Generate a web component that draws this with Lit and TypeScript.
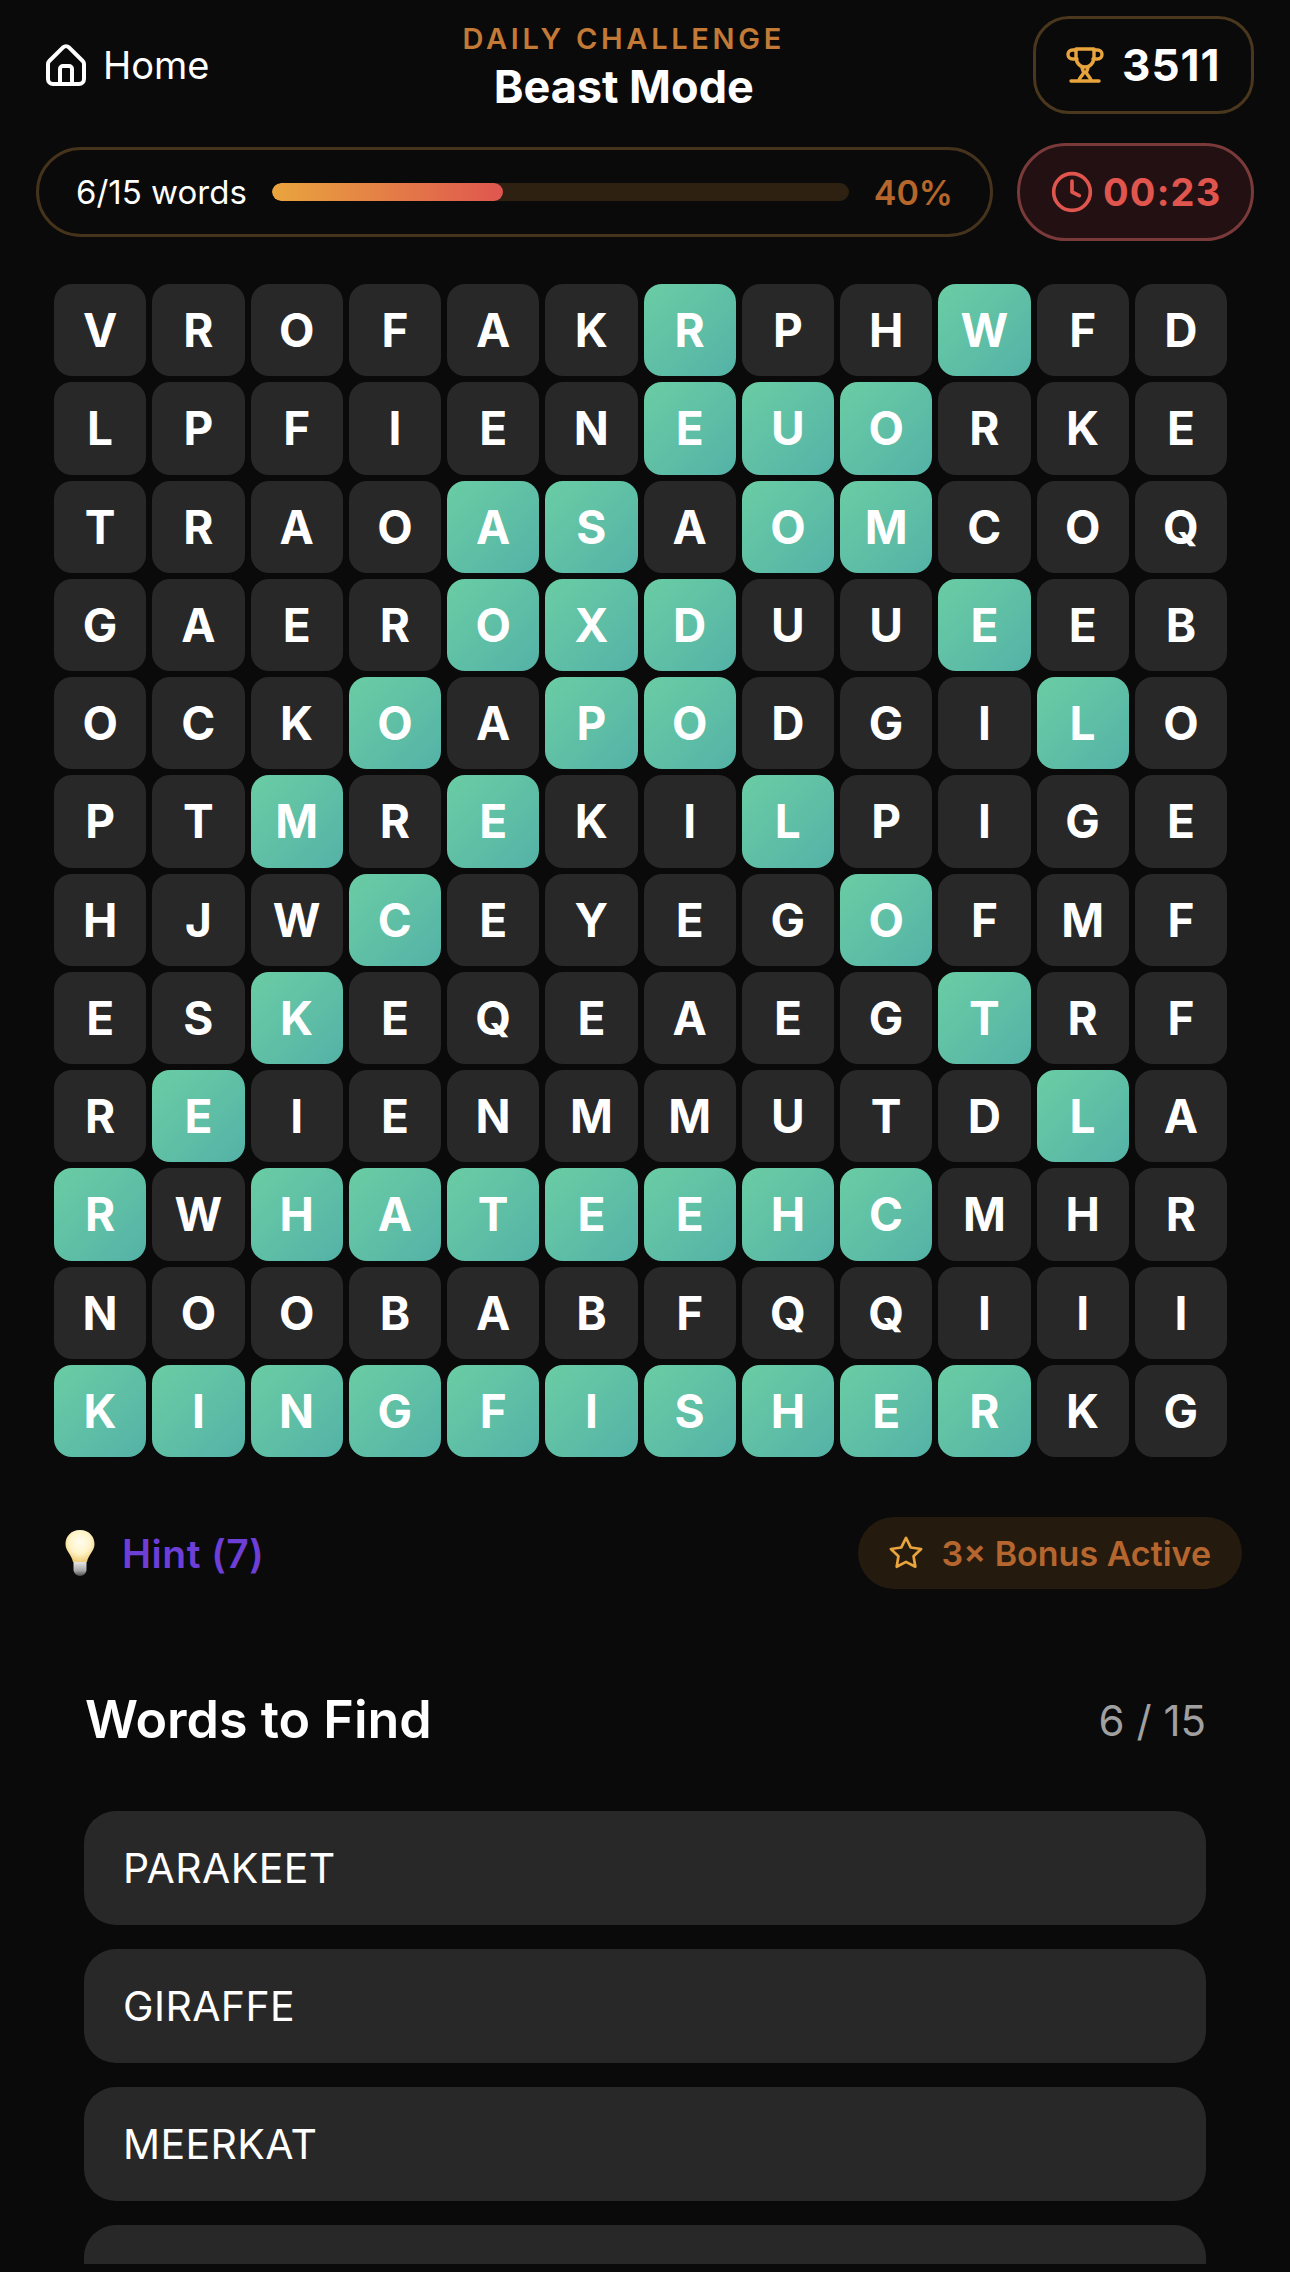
import { LitElement, html, css } from 'lit';
import { customElement } from 'lit/decorators.js';

// lowercase letters are the cells of words already found
const GRID = [
  'VROFAKrPHwFD',
  'LPFIENeuoRKE',
  'TRAOasAomCOQ',
  'GAERoxdUUeEB',
  'OCKoApoDGIlO',
  'PTmReKIlPIGE',
  'HJWcEYEGoFMF',
  'ESkEQEAEGtRF',
  'ReIENMMUTDlA',
  'rWhateehcMHR',
  'NOOBABFQQIII',
  'kingfisherKG',
];

// the fourth row is cut off by the screen edge before its text starts
const WORDS = ['PARAKEET', 'GIRAFFE', 'MEERKAT', ''];

@customElement('app-root')
export class AppRoot extends LitElement {
  static styles = css`
    :host {
      display: block;
      height: 2272px;
      background: #0a0a0a;
      color: #fff;
      font-family: Inter, 'Noto Sans', sans-serif;
    }
    .screen {
      height: 2264px;
      overflow: hidden;
    }
    .header {
      display: flex;
      justify-content: space-between;
      align-items: center;
      padding: 16px 36px 0 46px;
    }
    .home {
      display: flex;
      align-items: center;
      gap: 17px;
      font-size: 38px;
      line-height: 44px;
    }
    .home svg {
      width: 40px;
      height: 42px;
    }
    .title {
      align-self: flex-start;
      margin: 6px 0 0 5px;
      text-align: center;
    }
    .eyebrow {
      font-size: 29px;
      line-height: 34px;
      font-weight: 600;
      letter-spacing: 3.7px;
      color: #c27a36;
    }
    .mode {
      margin-top: 4px;
      font-size: 45px;
      line-height: 54px;
      font-weight: 700;
    }
    .score {
      display: flex;
      align-items: center;
      gap: 18px;
      width: 221px;
      height: 98px;
      box-sizing: border-box;
      padding-left: 30px;
      border: 3px solid #4a371d;
      border-radius: 36px;
      font-size: 44px;
      font-weight: 700;
      letter-spacing: 1px;
    }
    .score svg {
      width: 38px;
      height: 38px;
    }
    .stats {
      display: flex;
      align-items: center;
      gap: 24px;
      padding: 29px 36px 0;
    }
    .progress {
      flex: 1;
      display: flex;
      align-items: center;
      height: 90px;
      box-sizing: border-box;
      padding: 0 37px;
      border: 3px solid #46331c;
      border-radius: 45px;
      font-size: 33px;
    }
    .track {
      flex: 1;
      height: 18px;
      margin: 0 25px;
      border-radius: 9px;
      background: #2e2111;
      overflow: hidden;
    }
    .fill {
      height: 100%;
      border-radius: 9px;
      background: linear-gradient(90deg, #e9a53d, #e0564f);
    }
    .pct {
      font-size: 34px;
      font-weight: 600;
      color: #b5662b;
    }
    .timer {
      display: flex;
      align-items: center;
      gap: 11px;
      width: 237px;
      height: 98px;
      box-sizing: border-box;
      padding-left: 32px;
      border: 3px solid #7a3a3a;
      border-radius: 49px;
      background: #221012;
      font-size: 38px;
      font-weight: 700;
      letter-spacing: 1.2px;
      color: #e0564f;
    }
    .timer svg {
      width: 44px;
      height: 44px;
      margin: 0 -2px;
    }
    .grid {
      display: grid;
      grid-template-columns: repeat(12, 1fr);
      gap: 6px;
      width: 1173px;
      margin: 43px 0 0 54px;
    }
    .cell {
      height: 92.25px;
      display: flex;
      align-items: center;
      justify-content: center;
      border-radius: 18px;
      background: #282828;
      font-size: 46px;
      font-weight: 700;
    }
    .cell.found {
      background: linear-gradient(135deg, #6acda4, #54b2a7);
    }
    .tools {
      display: flex;
      align-items: center;
      justify-content: space-between;
      padding: 60px 48px 0 59px;
    }
    .hint {
      display: flex;
      align-items: center;
      gap: 21px;
      font-size: 39px;
      font-weight: 600;
      letter-spacing: 0.5px;
      color: #6d3fd6;
    }
    .hint svg {
      width: 42px;
      height: 48px;
    }
    .bonus {
      display: flex;
      align-items: center;
      gap: 17px;
      height: 72px;
      box-sizing: border-box;
      padding: 0 31px 0 29px;
      border-radius: 36px;
      background: #251a0e;
      font-size: 34px;
      font-weight: 600;
      color: #b5662f;
    }
    .bonus svg {
      width: 38px;
      height: 38px;
    }
    .words {
      padding: 99px 84px 0;
    }
    .words-head {
      display: flex;
      align-items: center;
      justify-content: space-between;
      padding-left: 1px;
      margin-bottom: 59px;
    }
    .words-head h2 {
      margin: 0;
      font-size: 52px;
      line-height: 64px;
      font-weight: 600;
    }
    .count {
      font-size: 42px;
      color: #a0a0a0;
    }
    .word {
      display: flex;
      align-items: center;
      height: 114px;
      padding: 0 39px;
      margin-bottom: 24px;
      border-radius: 32px;
      background: #282828;
      font-size: 41px;
      letter-spacing: 0.4px;
    }
  `;

  render() {
    return html`
      <div class="screen">
        <div class="header">
          <div class="home">
            <svg viewBox="0 0 40 42" fill="none" stroke="#fff" stroke-width="4" stroke-linejoin="round" stroke-linecap="round">
              <path d="M2 20a4 4 0 0 1 1.300-3L17.300 3.200a4 4 0 0 1 5.400 0L36.700 17a4 4 0 0 1 1.300 3V35a5 5 0 0 1-5 5H7a5 5 0 0 1-5-5Z" />
              <path d="M14 40V25a3 3 0 0 1 3-3h6a3 3 0 0 1 3 3v15" />
            </svg>
            Home
          </div>
          <div class="title">
            <div class="eyebrow">DAILY CHALLENGE</div>
            <div class="mode">Beast Mode</div>
          </div>
          <div class="score">
            <svg viewBox="0 0 38 38" fill="none" stroke="#e9a53d" stroke-width="3.4" stroke-linejoin="round" stroke-linecap="round">
              <path d="M10 3h18v8c0 6-4 10-9 10s-9-4-9-10Z" />
              <path d="M10 4H6.500a4.500 4.500 0 0 0 0 9H11" />
              <path d="M28 4h3.500a4.500 4.500 0 0 1 0 9H27" />
              <path d="M16 21c0 3 2 4 1.500 6S14 31 13 34" />
              <path d="M22 21c0 3-2 4-1.500 6s3.500 4 4.500 7" />
              <path d="M5 35h28" />
            </svg>
            3511
          </div>
        </div>

        <div class="stats">
          <div class="progress">
            <span>6/15 words</span>
            <div class="track"><div class="fill" style="width: 40%"></div></div>
            <span class="pct">40%</span>
          </div>
          <div class="timer">
            <svg viewBox="0 0 24 24" fill="none" stroke="#e0564f" stroke-width="2" stroke-linejoin="round" stroke-linecap="round">
              <circle cx="12" cy="12" r="10" />
              <path d="M12 6v6l4 2" />
            </svg>
            00:23
          </div>
        </div>

        <div class="grid">
          ${GRID.flatMap((row) =>
            [...row].map((ch) => {
              const found = ch === ch.toLowerCase();
              return html`<div class="cell ${found ? 'found' : ''}">${ch.toUpperCase()}</div>`;
            }),
          )}
        </div>

        <div class="tools">
          <div class="hint">
            <svg viewBox="0 0 42 48">
              <defs>
                <radialGradient id="glass" cx="50%" cy="38%" r="60%">
                  <stop offset="0" stop-color="#fffdf0" />
                  <stop offset="0.6" stop-color="#fff4c8" />
                  <stop offset="1" stop-color="#efcf7e" />
                </radialGradient>
                <linearGradient id="screw" x1="0" y1="0" x2="0" y2="1">
                  <stop offset="0" stop-color="#e6e6e6" />
                  <stop offset="0.6" stop-color="#a8a8a8" />
                  <stop offset="1" stop-color="#4a4a4a" />
                </linearGradient>
              </defs>
              <path d="M21 1C11.500 1 6.500 8 6.500 15c0 7 6 10.500 7.500 18h14c1.500-7.500 7.500-11 7.500-18C35.500 8 30.500 1 21 1Z" fill="url(#glass)" />
              <path d="M14.500 33h13v8c0 3-3.500 6-6.500 6s-6.500-3-6.500-6Z" fill="url(#screw)" />
            </svg>
            Hint (7)
          </div>
          <div class="bonus">
            <svg viewBox="0 0 24 24" fill="none" stroke="#e9a53d" stroke-width="1.7" stroke-linejoin="round" stroke-linecap="round">
              <path d="M12 2.500l2.950 6 6.600.95-4.780 4.650 1.130 6.580L12 17.570 6.100 20.680l1.130-6.580L2.450 9.450l6.600-.95Z" />
            </svg>
            3× Bonus Active
          </div>
        </div>

        <div class="words">
          <div class="words-head">
            <h2>Words to Find</h2>
            <span class="count">6 / 15</span>
          </div>
          ${WORDS.map((w) => html`<div class="word">${w}</div>`)}
        </div>
      </div>
    `;
  }
}
